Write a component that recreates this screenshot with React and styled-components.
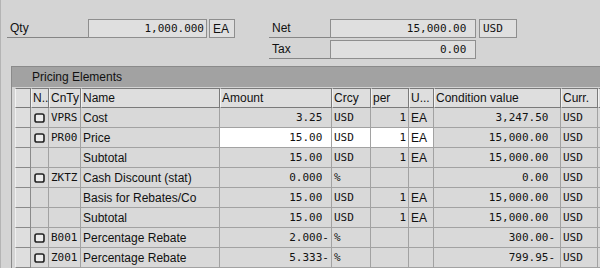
import React from 'react';
import styled, { createGlobalStyle } from 'styled-components';

const GlobalStyle = createGlobalStyle`
  html, body {
    margin: 0;
    padding: 0;
    background: #d4d4d4;
  }
`;

const Page = styled.div`
  width: 600px;
  height: 268px;
  overflow: hidden;
  background: #d4d4d4;
  border-left: 1px solid #b4b4b4;
  box-sizing: border-box;
  font-family: Arial, "Liberation Sans", sans-serif;
  font-size: 12px;
  color: #111;
`;

const Header = styled.div`
  display: flex;
  flex-direction: column;
  gap: 2px;
  padding: 19px 0 0 6px;
`;

const FieldRow = styled.div`
  display: flex;
  height: 19px;
  margin-left: ${(p) => p.$indent || 0}px;
`;

const Label = styled.div`
  width: ${(p) => p.$w}px;
  box-sizing: border-box;
  border-bottom: 1px solid #858585;
  padding-left: 3px;
  display: flex;
  align-items: center;
  margin-left: ${(p) => p.$ml || 0}px;
`;

const Field = styled.div`
  width: ${(p) => p.$w}px;
  box-sizing: border-box;
  border: 1px solid #8e8e8e;
  background: #dfdfdf;
  display: flex;
  align-items: center;
  justify-content: ${(p) => (p.$left ? 'flex-start' : 'flex-end')};
  padding: 0 ${(p) => (p.$left ? 0 : 2)}px 0 ${(p) => (p.$left ? 3 : 0)}px;
  margin-left: ${(p) => p.$ml || 0}px;
  font-family: ${(p) => (p.$sans ? 'Arial, "Liberation Sans", sans-serif' : '"DejaVu Sans Mono", monospace')};
  font-size: ${(p) => (p.$sans ? 12 : 11)}px;
  white-space: pre;
`;

const Panel = styled.div`
  margin: 7px 0 0 10px;
  border-left: 1px solid #8a8a8a;
  border-top: 1px solid #8a8a8a;
`;

const PanelTitle = styled.div`
  height: 20px;
  background: #a2a2a2;
  display: flex;
  align-items: center;
  padding-left: 20px;
  margin-bottom: 1px;
`;

const Table = styled.div`
  margin-left: 3px;
  display: grid;
  grid-template-columns: 16px 18px 32px 139px 112px 39px 38px 25px 127px 37px 40px;
  grid-auto-rows: 20px;
`;

const HeadCell = styled.div`
  box-sizing: border-box;
  background: #dedede;
  border: 1px solid #7a7a7a;
  border-left: 1px solid #f2f2f2;
  display: flex;
  align-items: center;
  padding-left: 1px;
  white-space: nowrap;
  overflow: hidden;
`;

const Cell = styled.div`
  box-sizing: border-box;
  background: ${(p) => (p.$edit ? '#ffffff' : '#d9d9d9')};
  border-right: 1px solid #a2a2a2;
  border-bottom: 1px solid #a2a2a2;
  display: flex;
  align-items: center;
  justify-content: ${(p) => (p.$right ? 'flex-end' : p.$center ? 'center' : 'flex-start')};
  padding: 0 ${(p) => (p.$right ? p.$pr ?? 2 : 0)}px 0 ${(p) => (p.$right || p.$center ? 0 : 2)}px;
  font-family: ${(p) => (p.$mono ? '"DejaVu Sans Mono", monospace' : 'Arial, "Liberation Sans", sans-serif')};
  font-size: ${(p) => (p.$mono ? 11 : 12)}px;
  white-space: pre;
  overflow: hidden;
`;

const SelCell = styled.div`
  box-sizing: border-box;
  background: #dedede;
  border: 1px solid #8a8a8a;
  border-top: none;
  border-left: 1px solid #efefef;
`;

const Box = () => (
  <svg width="11" height="10" viewBox="0 0 11 10">
    <rect x="1" y="1" width="9" height="8" rx="1.8" fill="#ececec" stroke="#222" strokeWidth="1.6" />
  </svg>
);

const rows = [
  { box: true, ty: 'VPRS', name: 'Cost', amt: '3.25 ', cur: 'USD', per: '1', u: 'EA', val: '3,247.50 ' },
  { box: true, ty: 'PR00', name: 'Price', amt: '15.00 ', cur: 'USD', per: '1', u: 'EA', val: '15,000.00 ', edit: true },
  { name: 'Subtotal', amt: '15.00 ', cur: 'USD', per: '1', u: 'EA', val: '15,000.00 ' },
  { box: true, ty: 'ZKTZ', name: 'Cash Discount (stat)', amt: '0.000 ', cur: '%', val: '0.00 ' },
  { name: 'Basis for Rebates/Co', amt: '15.00 ', cur: 'USD', per: '1', u: 'EA', val: '15,000.00 ' },
  { name: 'Subtotal', amt: '15.00 ', cur: 'USD', per: '1', u: 'EA', val: '15,000.00 ' },
  { box: true, ty: 'B001', name: 'Percentage Rebate', amt: '2.000-', cur: '%', val: '300.00-' },
  { box: true, ty: 'Z001', name: 'Percentage Rebate', amt: '5.333-', cur: '%', val: '799.95-' },
];

const heads = ['', 'N..', 'CnTy', 'Name', 'Amount', 'Crcy', 'per', 'U...', 'Condition value', 'Curr.', ''];

export default function App() {
  return (
    <Page>
      <GlobalStyle />
      <Header>
        <FieldRow>
          <Label $w={81}>Qty</Label>
          <Field $w={119}>1,000.000</Field>
          <Field $w={26} $ml={2} $left $sans>EA</Field>
          <Label $w={61} $ml={34}>Net</Label>
          <Field $w={146}>15,000.00 </Field>
          <Field $w={38} $ml={3} $left>USD</Field>
        </FieldRow>
        <FieldRow $indent={262}>
          <Label $w={61}>Tax</Label>
          <Field $w={146}>0.00 </Field>
        </FieldRow>
      </Header>
      <Panel>
        <PanelTitle>Pricing Elements</PanelTitle>
        <Table>
          {heads.map((h, i) => (
            <HeadCell key={i}>{h}</HeadCell>
          ))}
          {rows.map((r, i) => (
            <React.Fragment key={i}>
              <SelCell />
              <Cell $center>{r.box && <Box />}</Cell>
              <Cell $mono>{r.ty || ''}</Cell>
              <Cell>{r.name}</Cell>
              <Cell $mono $right $edit={r.edit}>{r.amt}</Cell>
              <Cell $mono $edit={r.edit}>{r.cur}</Cell>
              <Cell $mono $right $edit={r.edit}>{r.per || ''}</Cell>
              <Cell $edit={r.edit}>{r.u || ''}</Cell>
              <Cell $mono $right $pr={5}>{r.val}</Cell>
              <Cell $mono>USD</Cell>
              <Cell />
            </React.Fragment>
          ))}
        </Table>
      </Panel>
    </Page>
  );
}
